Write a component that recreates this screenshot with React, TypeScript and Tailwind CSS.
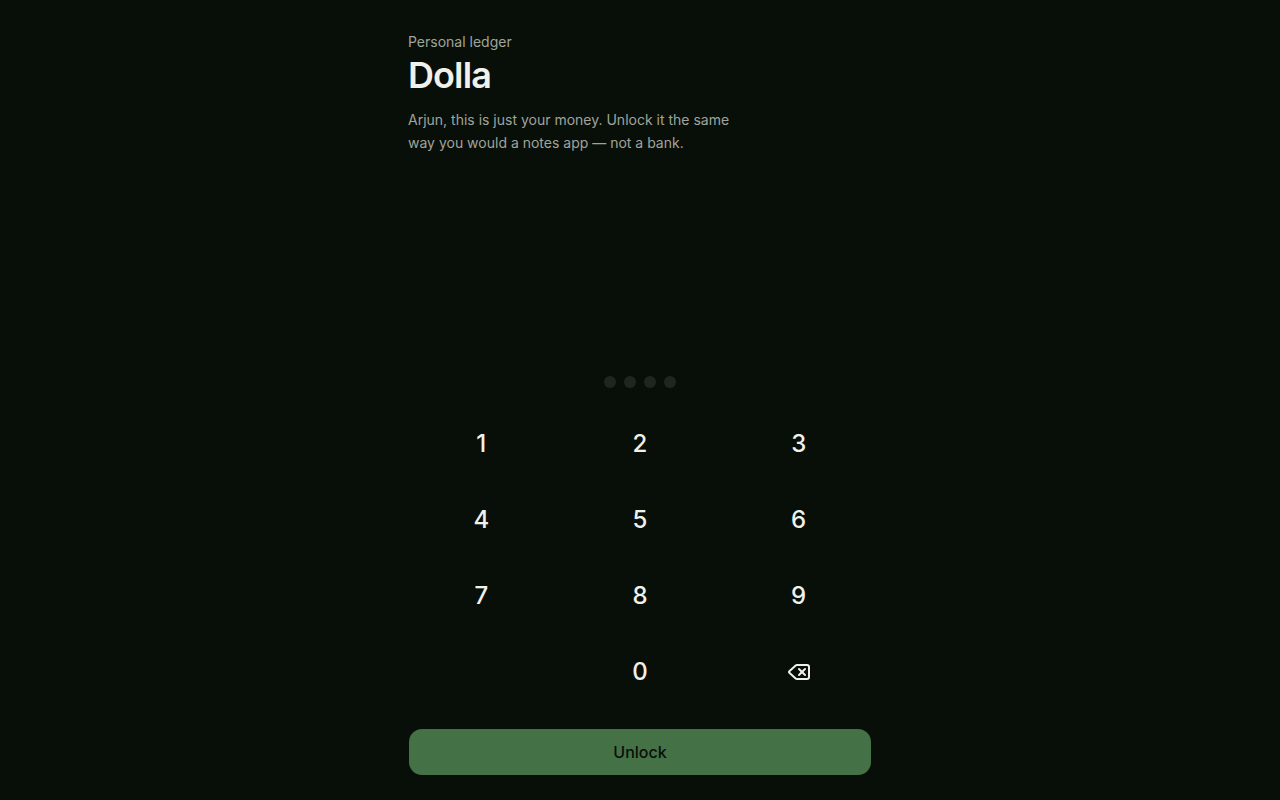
import { useState } from "react"
import { Delete } from "lucide-react"

const PIN_LENGTH = 4
const DIGITS = ["1", "2", "3", "4", "5", "6", "7", "8", "9"]

const keyClass =
  "flex h-16 items-center justify-center rounded-2xl text-2xl font-medium hover:bg-white/5"

export default function App() {
  const [pin, setPin] = useState("")

  const press = (digit: string) => setPin((p) => (p.length < PIN_LENGTH ? p + digit : p))

  return (
    <main className="min-h-screen bg-[#080f08] font-['Inter',sans-serif] text-[#f0f1eb]">
      <div className="mx-auto flex min-h-screen max-w-lg flex-col px-6 pt-8 pb-6">
        <header>
          <p className="text-sm text-[#a0a49d]">Personal ledger</p>
          <h1 className="mt-1 text-4xl leading-[38px] font-semibold tracking-tight">Dolla</h1>
          <p className="mt-3.5 max-w-[336px] text-sm leading-[23px] text-[#a0a49d]">
            Arjun, this is just your money. Unlock it the same way you would a notes app — not a bank.
          </p>
        </header>

        <div className="mt-auto flex justify-center gap-2">
          {Array.from({ length: PIN_LENGTH }, (_, i) => (
            <span
              key={i}
              className={i < pin.length ? "size-3 rounded-full bg-[#f0f1eb]" : "size-3 rounded-full bg-[#1f261f]"}
            />
          ))}
        </div>

        <div className="mt-6 grid grid-cols-3 gap-3">
          {DIGITS.map((digit) => (
            <button key={digit} type="button" className={keyClass} onClick={() => press(digit)}>
              {digit}
            </button>
          ))}
          <span />
          <button type="button" className={keyClass} onClick={() => press("0")}>
            0
          </button>
          <button
            type="button"
            aria-label="Delete"
            className={keyClass}
            onClick={() => setPin((p) => p.slice(0, -1))}
          >
            <Delete className="size-6" />
          </button>
        </div>

        <button
          type="button"
          className="mt-6 h-12 w-full rounded-[14px] border border-transparent bg-[#457146] bg-clip-padding text-base font-medium text-[#080f08]"
        >
          Unlock
        </button>
      </div>
    </main>
  )
}
